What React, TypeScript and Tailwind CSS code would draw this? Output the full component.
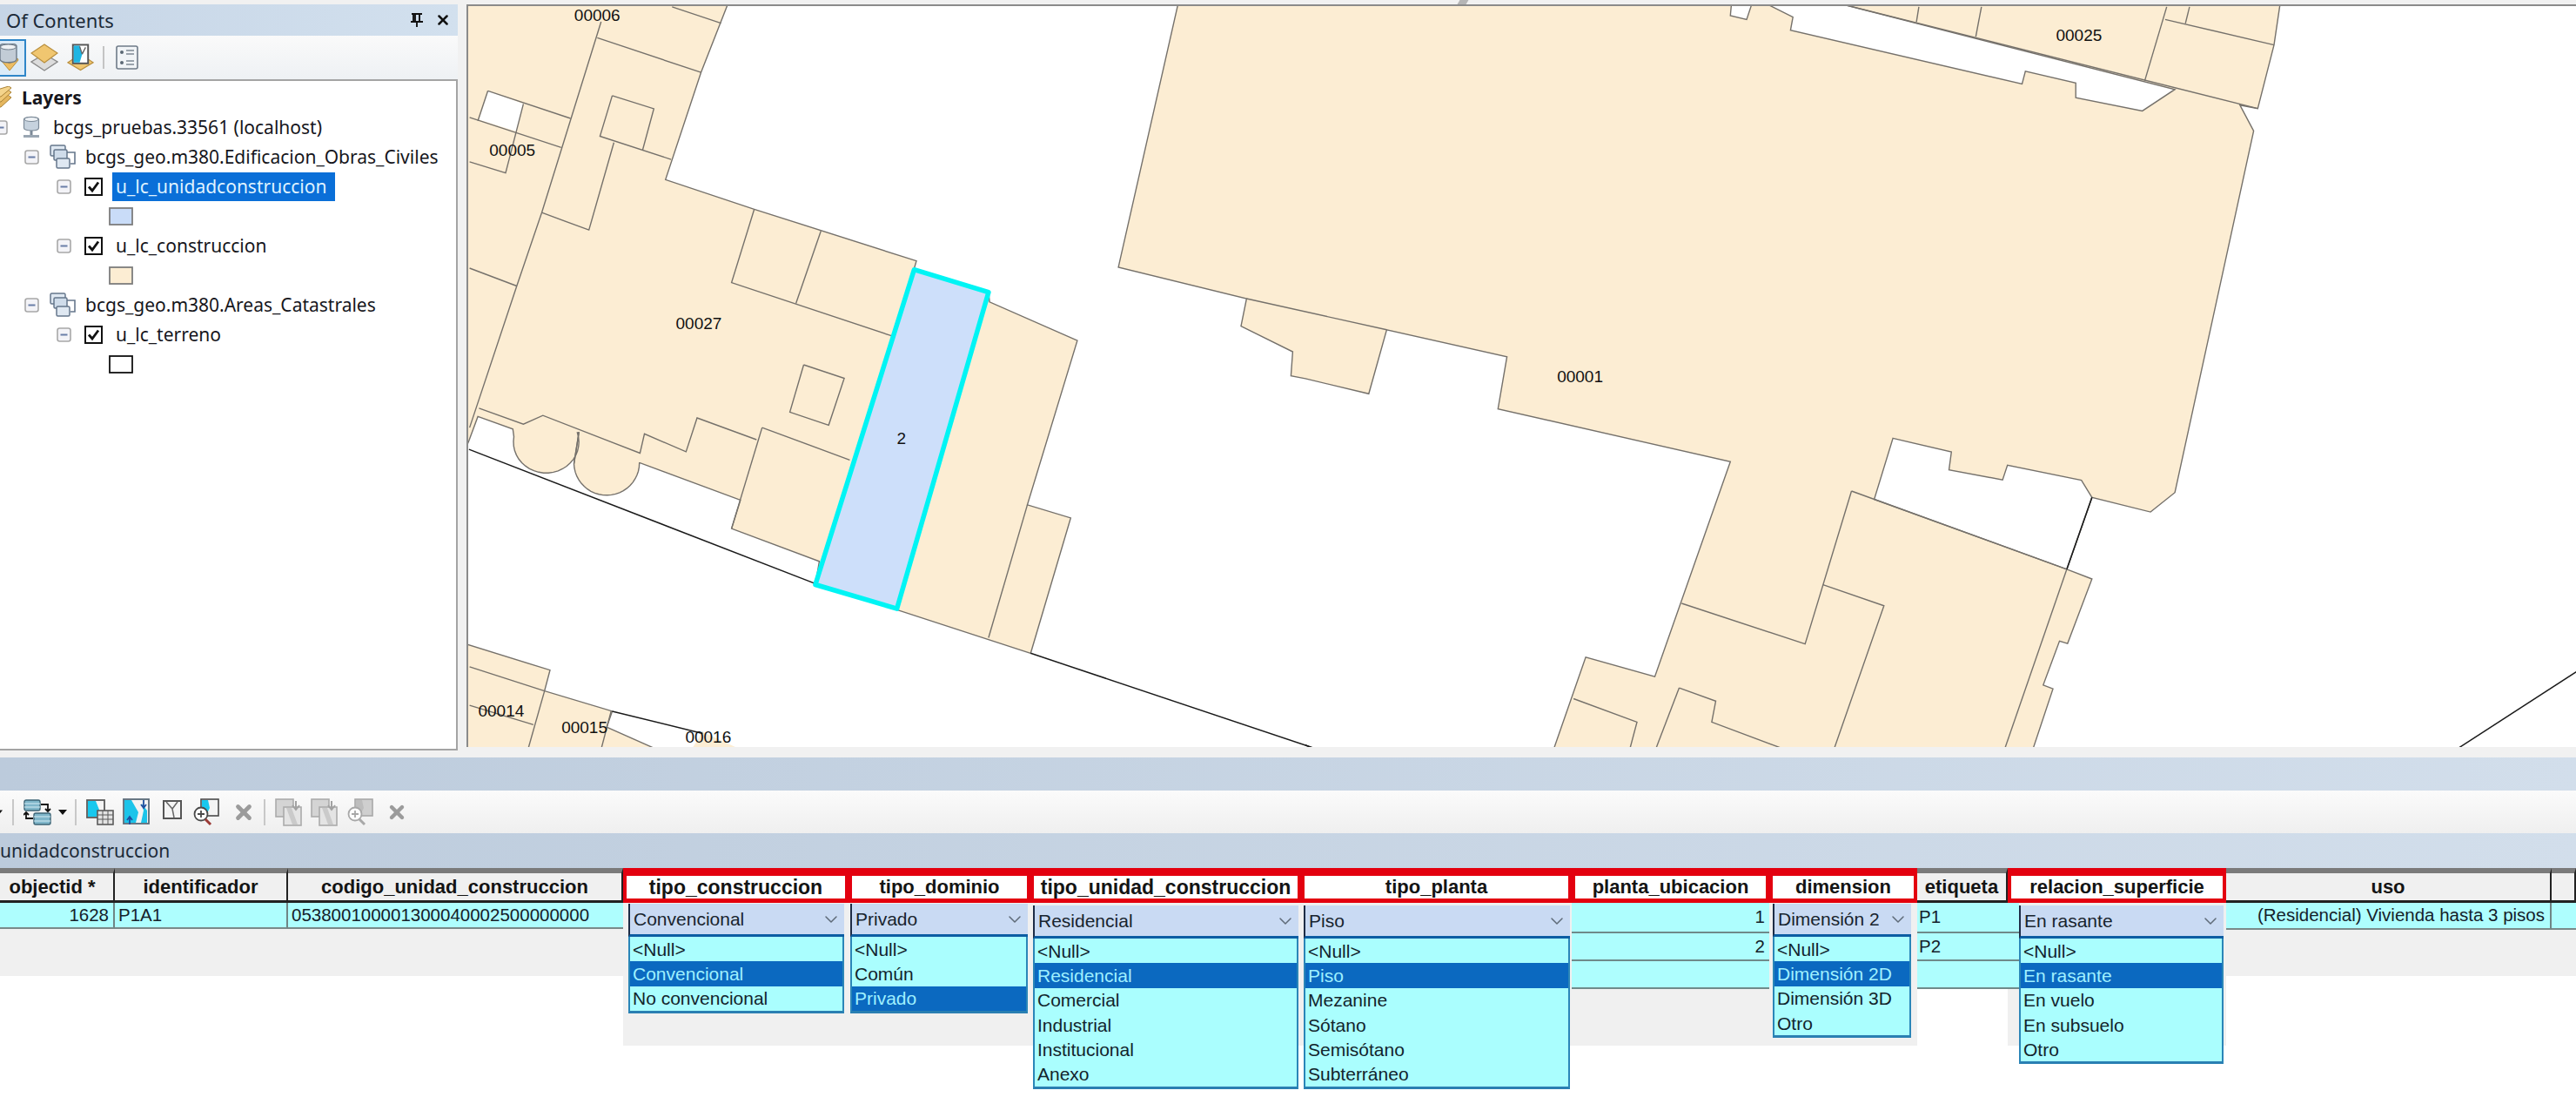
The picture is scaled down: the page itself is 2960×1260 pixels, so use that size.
import React from "react";
import { ChevronDown, X } from "lucide-react";

type P = [number, number];
const a = (pts: P[]): P[] => pts.map(([x, y]) => [530 + x / 1.568, y / 1.802]);
const b = (pts: P[]): P[] => pts.map(([x, y]) => [1500 + x / 1.071, y / 1.782]);
const str = (pts: P[]) => pts.map(([x, y]) => `${x.toFixed(1)},${y.toFixed(1)}`).join(" ");
const arc = (cx: number, cy: number, rx: number, ry: number, from: number, to: number): P[] => {
  const out: P[] = [];
  for (let i = 0; i <= 24; i++) {
    const t = ((from + ((to - from) * i) / 24) * Math.PI) / 180;
    out.push([cx + rx * Math.cos(t), cy + ry * Math.sin(t)]);
  }
  return out;
};

const FILL = "#fcedd3";
const LINE = "#75716b";

const leftOutline: P[] = [
  [0, -20], [490, -20], [432, 150], [368, 372], [528, 433], [820, 540], [816, 556], [950, 603], [952, 625], [1110, 705], [1020, 1045], [1098, 1072],
  [1026, 1352], [785, 1262], [638, 1210], [645, 1162], [487, 1094], [503, 1035], [322, 958],
  ...arc(262, 958, 59, 67, 0, 178), [212, 895],
  ...arc(153, 915, 59, 64, -18, 190), [93, 888], [30, 862], [14, 912], [0, 950],
];
const leftLines: P[][] = [
  [[380, 14], [468, 48]],
  [[245, 78], [432, 150]],
  [[252, 45], [145, 440], [100, 592], [15, 885]],
  [[48, 188], [197, 245]],
  [[15, 243], [180, 305]],
  [[48, 188], [30, 250]],
  [[112, 215], [80, 358], [15, 335]],
  [[272, 198], [347, 225], [327, 310]],
  [[272, 198], [250, 282], [378, 330]],
  [[275, 295], [230, 476], [145, 440]],
  [[15, 555], [100, 592]],
  [[528, 433], [487, 585], [775, 695]],
  [[648, 478], [603, 628]],
  [[617, 755], [690, 783], [662, 880], [592, 853], [617, 755]],
  [[32, 845], [112, 878], [147, 860], [322, 938], [330, 898], [405, 935], [425, 865], [532, 910]],
  [[542, 885], [700, 952]],
  [[542, 885], [487, 1094]],
  [[1020, 1045], [950, 1320]],
  [[212, 895], [203, 960]],
];
const bottomLeft: P[] = [[0, 1330], [160, 1387], [150, 1430], [272, 1472], [262, 1505], [370, 1560], [0, 1560]];
const bottomLeftLines: P[][] = [
  [[15, 1380], [150, 1430]],
  [[15, 1460], [130, 1500]],
  [[150, 1430], [118, 1560]],
  [[270, 1472], [250, 1560]],
  [[435, 1515], [420, 1560]],
];
const rightOutline: P[] = [
  ...a([[1297, -20]]),
  ...b([[1202, -20], [1192, 92], [1172, 222], [1150, 215], [1167, 268], [1070, 1008], [1040, 1048], [968, 1018], [937, 1165], [968, 1185], [938, 1317], [928, 1312], [908, 1402], [920, 1410], [890, 1560], [300, 1560], [345, 1345], [430, 1385], [523, 945], [237, 837], [248, 730], [100, 675], [78, 806], [0, 775]]),
  ...a([[1495, 778], [1498, 728], [1405, 675], [1415, 618], [1184, 553]]),
];
const rightHoles: P[][] = [
  [[723, 897], [795, 925], [792, 962], [858, 982], [864, 952], [955, 983], [968, 1018], [937, 1165], [700, 1022]],
  [[552, -5], [600, 35], [597, 62], [882, 172], [886, 146], [948, 170], [948, 200], [1030, 227], [1070, 183], [640, 0]],
  [[525, -5], [552, -5], [543, 40], [523, 32]],
];
const rightLines: P[][] = [
  [[640, 0], [1172, 222]],
  [[755, 14], [752, 45]],
  [[832, 14], [825, 75]],
  [[1060, 14], [1033, 165]],
  [[1088, 14], [1083, 48]],
  [[1058, 40], [1192, 92]],
  [[672, 1005], [615, 1318], [463, 1235]],
  [[672, 1005], [937, 1165]],
  [[637, 1197], [712, 1240], [645, 1560]],
  [[937, 1165], [855, 1560]],
  [[330, 1430], [408, 1478], [395, 1560]],
  [[460, 1408], [425, 1560]],
  [[460, 1408], [505, 1435], [500, 1478], [600, 1540]],
];
const labels: { t: string; p: P }[] = [
  { t: "00006", p: a([[245, 32]])[0] },
  { t: "00005", p: a([[92, 311]])[0] },
  { t: "00027", p: a([[428, 670]])[0] },
  { t: "2", p: a([[793, 908]])[0] },
  { t: "00014", p: a([[72, 1472]])[0] },
  { t: "00015", p: a([[222, 1506]])[0] },
  { t: "00016", p: a([[445, 1526]])[0] },
  { t: "00025", p: b([[952, 72]])[0] },
  { t: "00001", p: b([[338, 771]])[0] },
];

function MapView() {
  return (
    <svg viewBox="538 7 2422 851" className="block w-[2422px] h-[851px] bg-white">
      <polygon points={str(a(leftOutline))} fill={FILL} stroke={LINE} strokeWidth="1.4" />
      <polygon points={str(a([[48, 188], [112, 215], [100, 272], [32, 248]]))} fill="#fff" stroke="none" />
      {leftLines.map((l, i) => (
        <polyline key={i} points={str(a(l))} fill="none" stroke={LINE} strokeWidth="1.4" />
      ))}
      <polygon points={str(a(bottomLeft))} fill={FILL} stroke={LINE} strokeWidth="1.4" />
      {bottomLeftLines.map((l, i) => (
        <polyline key={i} points={str(a(l))} fill="none" stroke={LINE} strokeWidth="1.4" />
      ))}
      <polygon points={str(a([[435, 1515], [520, 1560], [410, 1560]]))} fill={FILL} />
      <polyline points={str(a([[14, 930], [638, 1208]]))} fill="none" stroke="#1a1a1a" strokeWidth="1.5" />
      <polyline points={str(a([[1026, 1352], [1535, 1548]]))} fill="none" stroke="#1a1a1a" strokeWidth="1.5" />
      <polyline points={str(a([[272, 1472], [435, 1518]]))} fill="none" stroke="#1a1a1a" strokeWidth="1.5" />
      <polygon points={str(rightOutline)} fill={FILL} stroke={LINE} strokeWidth="1.4" />
      {rightHoles.map((l, i) => (
        <polygon key={i} points={str(b(l))} fill="#fff" stroke={LINE} strokeWidth="1.4" />
      ))}
      {rightLines.map((l, i) => (
        <polyline key={i} points={str(b(l))} fill="none" stroke={LINE} strokeWidth="1.4" />
      ))}
      <polyline points={str([...a([[1415, 618]]), ...b([[100, 675]])])} fill="none" stroke={LINE} strokeWidth="1.4" />
      <polyline points={str(b([[968, 1018], [937, 1165]]))} fill="none" stroke="#1a1a1a" strokeWidth="1.5" />
      <polyline points={str(b([[1420, 1530], [1564, 1375]]))} fill="none" stroke="#1a1a1a" strokeWidth="1.5" />
      <polyline points={str(b([[0, 1525], [10, 1532]]))} fill="none" stroke="#1a1a1a" strokeWidth="1.5" />
      <polygon points={str(a([[816, 558], [950, 605], [785, 1260], [638, 1210]]))} fill="#cddffa" stroke="#00f4f4" strokeWidth="5.5" strokeLinejoin="round" />
      {labels.map((l) => (
        <text key={l.t} x={l.p[0]} y={l.p[1]} textAnchor="middle" dominantBaseline="central" fontSize="19" fontFamily="Liberation Sans, sans-serif" fill="#111">
          {l.t}
        </text>
      ))}
    </svg>
  );
}

/* ---------- icons ---------- */
function Minus() {
  return (
    <svg viewBox="0 0 17 17" className="w-[17px] h-[17px] shrink-0">
      <rect x="1" y="1" width="15" height="15" rx="2.5" fill="#f3f3f7" stroke="#a8a8a8" strokeWidth="1.6" />
      <rect x="4.5" y="7.5" width="8" height="2" fill="#6a7ea8" />
    </svg>
  );
}
function Check() {
  return (
    <svg viewBox="0 0 21 21" className="w-[21px] h-[21px] shrink-0">
      <rect x="1" y="1" width="19" height="19" fill="#fff" stroke="#111" strokeWidth="2" />
      <path d="M5 10.5 L9 15 L16 5.5" fill="none" stroke="#111" strokeWidth="2.8" />
    </svg>
  );
}
function Group() {
  return (
    <svg viewBox="0 0 30 28" className="w-[30px] h-[28px] shrink-0">
      <rect x="1" y="1" width="17" height="12" rx="1.5" fill="#dfe8f2" stroke="#66778c" strokeWidth="1.5" />
      <rect x="5" y="6" width="15" height="12" rx="1.5" fill="#cfdcea" stroke="#66778c" strokeWidth="1.5" />
      <rect x="8" y="16" width="15" height="11" rx="1.5" fill="#dfe8f2" stroke="#66778c" strokeWidth="1.5" />
      <path d="M20 9 H29 V22 H24" fill="none" stroke="#66778c" strokeWidth="1.6" />
    </svg>
  );
}
function Server() {
  return (
    <svg viewBox="0 0 20 27" className="w-[20px] h-[27px] shrink-0">
      <path d="M1.5 4 C1.5 0.5 18.5 0.5 18.5 4 V14 C18.5 18 1.5 18 1.5 14 Z" fill="#c6d2de" stroke="#7c8a98" strokeWidth="1.2" />
      <ellipse cx="10" cy="4" rx="8" ry="2.5" fill="#eef2f6" stroke="#7c8a98" strokeWidth="1" />
      <rect x="8.5" y="17" width="3" height="5" fill="#7c8a98" />
      <rect x="1" y="22" width="18" height="3" fill="#9aa6b2" />
    </svg>
  );
}
function LayersFolder() {
  return (
    <svg viewBox="0 0 20 26" className="w-[20px] h-[26px] shrink-0 -ml-[5px]">
      <path d="M2 16 L14 10 L18 13 L6 24 H2 Z" fill="#e5b65e" stroke="#a98236" strokeWidth="1" />
      <path d="M2 10 L14 4 L18 7 L6 18 H2 Z" fill="#efc775" stroke="#a98236" strokeWidth="1" />
      <path d="M2 4 L15 0 L18 2 L6 12 H2 Z" fill="#f4d48c" stroke="#a98236" strokeWidth="1" />
    </svg>
  );
}
function Swatch({ fill, stroke }: { fill: string; stroke: string }) {
  return (
    <svg viewBox="0 0 28 21" className="w-[28px] h-[21px] shrink-0">
      <rect x="1" y="1" width="26" height="19" fill={fill} stroke={stroke} strokeWidth="1.8" />
    </svg>
  );
}
function TocDb() {
  return (
    <svg viewBox="0 0 22 32" className="w-[22px] h-[32px]">
      <path d="M2 17 L11 23 L20 17 L21 19 L11 31 L1 19 Z" fill="#edbd62" stroke="#b98f3e" strokeWidth="1" />
      <path d="M0 3 C0 -1 19 -1 19 3 V18 C19 23 0 23 0 18 Z" fill="#c2ccd6" stroke="#6d7b89" strokeWidth="1.4" />
      <ellipse cx="9.5" cy="4" rx="9" ry="3" fill="#eef1f4" stroke="#6d7b89" strokeWidth="1" />
    </svg>
  );
}
function TocLayers() {
  return (
    <svg viewBox="0 0 32 32" className="w-[32px] h-[32px]">
      <path d="M16 12 L31 21 L16 31 L1 21 Z" fill="#dcdcdc" stroke="#8a8a8a" strokeWidth="1.4" />
      <path d="M16 1 L31 11 L16 22 L1 11 Z" fill="#f0c670" stroke="#b98f3e" strokeWidth="1.2" />
    </svg>
  );
}
function TocMap() {
  return (
    <svg viewBox="0 0 32 32" className="w-[31px] h-[32px]">
      <path d="M16 12 L31 22 L16 31 L1 22 Z" fill="#f0c670" stroke="#b98f3e" strokeWidth="1.2" />
      <rect x="7" y="1" width="18" height="22" fill="#fff" stroke="#555" strokeWidth="2" />
      <path d="M8 2 H15 L18 12 L15 22 H8 Z" fill="#1fb6e4" />
      <path d="M18 12 L22 4 M18 12 L15 3" stroke="#666" strokeWidth="1.4" fill="none" />
    </svg>
  );
}
function TocList() {
  return (
    <svg viewBox="0 0 26 28" className="w-[26px] h-[28px]">
      <rect x="1" y="1" width="24" height="26" rx="2" fill="#f1f4f7" stroke="#6f7b88" strokeWidth="1.6" />
      <circle cx="7" cy="8" r="2" fill="#5b6875" />
      <circle cx="7" cy="20" r="2" fill="#5b6875" />
      <path d="M12 6 H21 M12 10 H21 M12 18 H21 M12 22 H21" stroke="#7d8894" strokeWidth="1.6" />
    </svg>
  );
}
function SwapTables() {
  return (
    <svg viewBox="0 0 32 30" className="w-[32px] h-[30px]">
      <rect x="1" y="1" width="18" height="12" rx="2" fill="#7fb6ca" stroke="#3c6476" strokeWidth="1.4" />
      <path d="M1 5 H19 M1 9 H19" stroke="#d6ecf4" strokeWidth="1" />
      <rect x="12" y="16" width="19" height="13" rx="2" fill="#7fb6ca" stroke="#3c6476" strokeWidth="1.4" />
      <path d="M12 20 H31 M12 25 H31" stroke="#d6ecf4" strokeWidth="1" />
      <path d="M20 6 H28 V13 M25 11 L28 14 L31 11" fill="none" stroke="#111" strokeWidth="1.8" />
      <path d="M11 22 H3 V16 M0 18 L3 15 L6 18" fill="none" stroke="#111" strokeWidth="1.8" />
    </svg>
  );
}
function SelectByTable() {
  return (
    <svg viewBox="0 0 32 30" className="w-[32px] h-[30px]">
      <rect x="1" y="1" width="20" height="20" fill="#f4f4f4" stroke="#5a5a5a" strokeWidth="1.8" />
      <path d="M2 2 H11 L15 12 L12 20 H2 Z" fill="#18c8ee" />
      <rect x="13" y="13" width="18" height="16" fill="#e3e3e3" stroke="#5a5a5a" strokeWidth="1.6" />
      <path d="M13 18 H31 M13 23 H31 M19 13 V29 M25 13 V29" stroke="#5a5a5a" strokeWidth="1" />
    </svg>
  );
}
function CopyMuted() {
  return (
    <svg viewBox="0 0 32 32" className="w-[32px] h-[32px]">
      <rect x="1" y="1" width="20" height="20" fill="#d4d4d4" stroke="#ababab" strokeWidth="1.6" />
      <rect x="10" y="10" width="20" height="21" fill="#e4e4e4" stroke="#ababab" strokeWidth="1.6" />
      <path d="M13 11 L20 30 H26 L19 11 Z" fill="#cacaca" />
      <path d="M24 3 V12 M20 8 L24 13 L28 8" fill="none" stroke="#a2a2a2" strokeWidth="2" />
    </svg>
  );
}
function SwitchSel() {
  return (
    <svg viewBox="0 0 32 32" className="w-[32px] h-[32px]">
      <rect x="1" y="1" width="29" height="28" fill="#f3f3f3" stroke="#5a6b78" strokeWidth="1.8" />
      <path d="M2 2 H10 L18 16 L15 28 H2 Z" fill="#1cc4ea" />
      <path d="M22 6 L28 14 V28 H21 L24 14 Z" fill="#1cc4ea" />
      <path d="M24 2 V10 M21 7 L24 11 L27 7" fill="none" stroke="#1f4f9e" strokeWidth="1.8" />
      <path d="M8 30 V22 M5 25 L8 21 L11 25" fill="none" stroke="#1f4f9e" strokeWidth="1.8" />
    </svg>
  );
}
function ClearSel() {
  return (
    <svg viewBox="0 0 22 22" className="w-[22px] h-[22px]">
      <rect x="1" y="1" width="20" height="20" fill="#f4f4f4" stroke="#555" strokeWidth="2" />
      <path d="M4 2 L11 10 L17 2 M11 10 L13 20" fill="none" stroke="#666" strokeWidth="1.5" />
    </svg>
  );
}
function ZoomSel({ mute }: { mute?: boolean }) {
  const s = mute ? "#a8a8a8" : "#4a4a4a";
  return (
    <svg viewBox="0 0 30 32" className="w-[30px] h-[32px]">
      <rect x="9" y="1" width="20" height="19" fill={mute ? "#cfcfcf" : "#f4f4f4"} stroke={s} strokeWidth="1.6" />
      <path d="M10 2 H17 L19 11 L15 19 H10 Z" fill={mute ? "#bdbdbd" : "#18c8ee"} />
      <circle cx="9" cy="18" r="7.5" fill="#fff" stroke={s} strokeWidth="1.8" />
      <path d="M5 18 H13 M9 14 V22" stroke={s} strokeWidth="1.8" />
      <path d="M14 24 L20 30" stroke={mute ? "#a8a8a8" : "#9a3a36"} strokeWidth="3" />
    </svg>
  );
}
function GrayX({ cls }: { cls: string }) {
  return <X className={cls} color="#9b9b9b" strokeWidth={4.4} />;
}
function PinIcon() {
  return (
    <svg viewBox="0 0 14 16" className="w-[14px] h-[16px]">
      <path d="M1 1 H13 M3 1 V10 M10 1 V10 M0 10 H14 M7 10 V16 M5 2 V9" fill="none" stroke="#111" strokeWidth="1.9" />
    </svg>
  );
}
function Sep({ cls }: { cls: string }) {
  return <div className={cls} />;
}
function Caret({ cls }: { cls: string }) {
  return (
    <svg viewBox="0 0 10 6" className={cls}>
      <path d="M0 0 H10 L5 6 Z" fill="#111" />
    </svg>
  );
}

/* ---------- tree ---------- */
const treeText = "text-[21px] leading-none text-[#16161c] font-['Noto_Sans',sans-serif] whitespace-nowrap";

function Tree() {
  return (
    <div className="flex-1 bg-white border-t-2 border-r-2 border-b-2 border-[#a4a4a4] flex flex-col pt-[2px]">
      <div className="h-[34px] flex items-center">
        <LayersFolder />
        <span className={`${treeText} ml-[10px] font-bold`}>Layers</span>
      </div>
      <div className="h-[34px] flex items-center">
        <div className="-ml-[8px]"><Minus /></div>
        <div className="ml-[17px]"><Server /></div>
        <span className={`${treeText} ml-[15px]`}>bcgs_pruebas.33561 (localhost)</span>
      </div>
      <div className="h-[34px] flex items-center pl-[28px]">
        <Minus />
        <div className="ml-[12px]"><Group /></div>
        <span className={`${treeText} ml-[11px]`}>bcgs_geo.m380.Edificacion_Obras_Civiles</span>
      </div>
      <div className="h-[34px] flex items-center pl-[65px]">
        <Minus />
        <div className="ml-[15px]"><Check /></div>
        <span className={`${treeText} ml-[11px] bg-[#0a6fd8] text-[#dff2ff] h-[33px] w-[256px] flex items-center pl-[4px]`}>u_lc_unidadconstruccion</span>
      </div>
      <div className="h-[34px] flex items-center pl-[125px]">
        <Swatch fill="#c9dcf8" stroke="#7d7d7d" />
      </div>
      <div className="h-[34px] flex items-center pl-[65px]">
        <Minus />
        <div className="ml-[15px]"><Check /></div>
        <span className={`${treeText} ml-[15px]`}>u_lc_construccion</span>
      </div>
      <div className="h-[34px] flex items-center pl-[125px]">
        <Swatch fill="#fcedd3" stroke="#7d7d7d" />
      </div>
      <div className="h-[34px] flex items-center pl-[28px]">
        <Minus />
        <div className="ml-[12px]"><Group /></div>
        <span className={`${treeText} ml-[11px]`}>bcgs_geo.m380.Areas_Catastrales</span>
      </div>
      <div className="h-[34px] flex items-center pl-[65px]">
        <Minus />
        <div className="ml-[15px]"><Check /></div>
        <span className={`${treeText} ml-[15px]`}>u_lc_terreno</span>
      </div>
      <div className="h-[34px] flex items-center pl-[125px]">
        <Swatch fill="#ffffff" stroke="#111111" />
      </div>
    </div>
  );
}

/* ---------- table ---------- */
const cell = "text-[20.5px] leading-none text-[#15212a] whitespace-nowrap";
const liRow = "text-[21px] leading-none whitespace-nowrap flex items-center pl-[3px] h-[28.3px]";

function RedHead({ t, cls }: { t: string; cls: string }) {
  return (
    <div className={`${cls} w-full h-[40px] shrink-0 bg-white border-[#e3000f] border-t-[9px] border-b-[5px] border-x-[4px] flex items-center justify-center overflow-hidden font-bold leading-none text-[#141414] whitespace-nowrap`}>
      {t}
    </div>
  );
}
function PlainHead({ t, cls }: { t: string; cls?: string }) {
  return (
    <div className={`${cls ?? ""} w-full h-[40px] shrink-0 bg-[#f0f0f0] border-t-[6px] border-t-[#7a7a7a] border-b-[3px] border-b-[#222] border-r-[2px] border-r-[#222] flex items-center justify-center overflow-hidden text-[22px] font-bold leading-none text-[#141414] whitespace-nowrap`}>
      {t}
    </div>
  );
}
function Combo({ cls, value, items, sel }: { cls: string; value: string; items: string[]; sel: string }) {
  return (
    <div className={cls}>
      <div className="h-[38px] bg-[#c9daf3] border-b-[3px] border-b-[#0c5da3] border-l-2 border-l-[#1d2c46] flex items-center pl-[4px] pr-[3px]">
        <span className="flex-1 min-w-0 overflow-hidden whitespace-nowrap text-[21px] leading-none text-[#18242e]">{value}</span>
        <ChevronDown className="ml-[10px] w-[24px] h-[24px] shrink-0" color="#5f6b78" strokeWidth={1.5} />
      </div>
      <div className="bg-[#aafefe] border-x-2 border-x-[#2a86b8] border-b-[3px] border-b-[#2a7fb2]">
        {items.map((it) => (
          <div key={it} className={`${liRow} ${it === sel ? "bg-[#0b69c0] text-[#9ff0ff]" : "text-[#12242c]"}`}>
            {it}
          </div>
        ))}
      </div>
    </div>
  );
}

export default function App() {
  return (
    <div className="w-[2960px] h-[1260px] overflow-hidden bg-white font-['Liberation_Sans',sans-serif]">
      {/* top area */}
      <div className="relative h-[870px] bg-[#f1f1f1] pt-[5px] flex items-start">
        <div className="absolute left-[1676px] top-0 w-[10px] h-[5px] bg-[#b5b5b5] -skew-x-[30deg]" />
        <div className="w-[526px] h-[857px] flex flex-col shrink-0">
          <div className="h-[36px] flex items-center bg-linear-to-r from-[#c6d5e6] to-[#d2e0ee] pl-[7px] pr-[8px]">
            <span className="text-[22px] leading-none text-[#1c2a38] font-['Noto_Sans',sans-serif]">Of Contents</span>
            <div className="ml-auto flex items-center gap-[14px]">
              <PinIcon />
              <X className="w-[18px] h-[18px]" color="#111" strokeWidth={3.4} />
            </div>
          </div>
          <div className="h-[50px] flex items-center bg-linear-to-b from-[#fafafa] to-[#eef1f4]">
            <div className="w-[30px] h-[43px] bg-[#dbebf8] border-2 border-l-0 border-[#2f86c8] flex items-center overflow-hidden">
              <TocDb />
            </div>
            <div className="ml-[5px]"><TocLayers /></div>
            <div className="ml-[10px]"><TocMap /></div>
            <Sep cls="ml-[10px] w-[2px] h-[26px] bg-[#c4c4c4]" />
            <div className="ml-[13px]"><TocList /></div>
          </div>
          <Tree />
        </div>
        <div className="ml-[10px] flex-1 h-[853px] border-t-2 border-t-[#8a8a8a] border-l-2 border-l-[#8a8a8a] overflow-hidden">
          <MapView />
        </div>
      </div>

      {/* attribute table window */}
      <div className="h-[38px] bg-linear-to-r from-[#bccbdc] to-[#d2deeb]" />
      <div className="h-[49px] bg-linear-to-b from-[#fbfbfb] to-[#efefef] flex items-center">
        <Caret cls="w-[8px] h-[6px] -ml-[5px]" />
        <Sep cls="ml-[11px] w-[2px] h-[30px] bg-[#c8c8c8]" />
        <div className="ml-[11px]"><SwapTables /></div>
        <Caret cls="ml-[8px] w-[10px] h-[6px]" />
        <Sep cls="ml-[9px] w-[2px] h-[30px] bg-[#c8c8c8]" />
        <div className="ml-[11px]"><SelectByTable /></div>
        <div className="ml-[10px]"><SwitchSel /></div>
        <div className="ml-[14px] -mt-[6px]"><ClearSel /></div>
        <div className="ml-[13px]"><ZoomSel /></div>
        <div className="ml-[15px]"><GrayX cls="w-[26px] h-[26px]" /></div>
        <Sep cls="ml-[10px] w-[2px] h-[30px] bg-[#c8c8c8]" />
        <div className="ml-[11px]"><CopyMuted /></div>
        <div className="ml-[9px]"><CopyMuted /></div>
        <div className="ml-[10px]"><ZoomSel mute /></div>
        <div className="ml-[15px]"><GrayX cls="w-[24px] h-[24px]" /></div>
      </div>
      <div className="h-[40px] flex items-center bg-linear-to-r from-[#bccbdc] to-[#d2deeb] pt-[1px]">
        <span className="text-[21px] leading-none text-[#1c2a38] font-['Noto_Sans',sans-serif]">unidadconstruccion</span>
      </div>

      {/* table */}
      <div className="h-[124px] bg-[#f0f0f0] flex items-start">
        <div className="w-[132px] shrink-0">
          <PlainHead t="objectid *" cls="pr-[10px]" />
          <div className={`${cell} h-[30px] bg-[#aefefe] border-b-2 border-b-[#7a8a8a] border-r-2 border-r-[#6f8585] flex items-center justify-end pr-[5px]`}>1628</div>
        </div>
        <div className="w-[199px] shrink-0">
          <PlainHead t="identificador" />
          <div className={`${cell} h-[30px] bg-[#aefefe] border-b-2 border-b-[#7a8a8a] border-r-2 border-r-[#6f8585] flex items-center pl-[4px]`}>P1A1</div>
        </div>
        <div className="w-[385px] shrink-0">
          <PlainHead t="codigo_unidad_construccion" />
          <div className={`${cell} h-[30px] bg-[#aefefe] border-b-2 border-b-[#7a8a8a] flex items-center pl-[4px]`}>053800100001300040002500000000</div>
        </div>

        <div className="w-[259px] h-[204px] shrink-0 bg-[#f0f0f0]">
          <RedHead t="tipo_construccion" cls="text-[23px]" />
          <Combo cls="ml-[6px] w-[248px] mt-[1px]" value="Convencional" items={["<Null>", "Convencional", "No convencional"]} sel="Convencional" />
        </div>
        <div className="w-[209px] h-[204px] shrink-0 bg-[#f0f0f0]">
          <RedHead t="tipo_dominio" cls="text-[22px]" />
          <Combo cls="ml-[2px] w-[204px] mt-[1px]" value="Privado" items={["<Null>", "Común", "Privado"]} sel="Privado" />
        </div>
        <div className="w-[311px] h-[204px] shrink-0 bg-[#f0f0f0]">
          <RedHead t="tipo_unidad_construccion" cls="text-[23px]" />
          <Combo cls="ml-[3px] w-[305px] mt-[3px]" value="Residencial" items={["<Null>", "Residencial", "Comercial", "Industrial", "Institucional", "Anexo"]} sel="Residencial" />
        </div>
        <div className="w-[311px] h-[204px] shrink-0 bg-[#f0f0f0]">
          <RedHead t="tipo_planta" cls="text-[22px]" />
          <Combo cls="ml-[3px] w-[306px] mt-[3px]" value="Piso" items={["<Null>", "Piso", "Mezanine", "Sótano", "Semisótano", "Subterráneo"]} sel="Piso" />
        </div>
        <div className="w-[227px] h-[204px] shrink-0 bg-[#f0f0f0]">
          <RedHead t="planta_ubicacion" cls="text-[22px]" />
          <div className={`${cell} h-[35px] bg-[#aefefe] border-b-2 border-b-[#6f8a8a] flex items-center justify-end pr-[5px]`}>1</div>
          <div className={`${cell} h-[32px] bg-[#aefefe] border-b-2 border-b-[#6f8a8a] flex items-center justify-end pr-[5px]`}>2</div>
          <div className={`${cell} h-[32px] bg-[#aefefe] border-b-2 border-b-[#6f8a8a]`} />
        </div>
        <div className="w-[170px] h-[204px] shrink-0 bg-[#f0f0f0]">
          <RedHead t="dimension" cls="text-[22px]" />
          <Combo cls="ml-[4px] w-[159px] mt-[1px]" value="Dimensión 2D" items={["<Null>", "Dimensión 2D", "Dimensión 3D", "Otro"]} sel="Dimensión 2D" />
        </div>
        <div className="w-[104px] h-[204px] shrink-0 relative z-10">
          <PlainHead t="etiqueta" />
          <div className="w-[117px]">
            <div className={`${cell} h-[35px] bg-[#aefefe] border-b-2 border-b-[#6f8a8a] flex items-center pl-[2px]`}>P1</div>
            <div className={`${cell} h-[32px] bg-[#aefefe] border-b-2 border-b-[#6f8a8a] flex items-center pl-[2px]`}>P2</div>
            <div className={`${cell} h-[32px] bg-[#aefefe] border-b-2 border-b-[#6f8a8a]`} />
          </div>
        </div>
        <div className="w-[251px] h-[204px] shrink-0 bg-[#f0f0f0]">
          <RedHead t="relacion_superficie" cls="text-[22px]" />
          <Combo cls="ml-[13px] w-[235px] mt-[3px]" value="En rasante" items={["<Null>", "En rasante", "En vuelo", "En subsuelo", "Otro"]} sel="En rasante" />
        </div>
        <div className="w-[374px] shrink-0">
          <PlainHead t="uso" />
          <div className={`${cell} h-[31px] bg-[#aefefe] border-b-2 border-b-[#7a8a8a] border-r-2 border-r-[#6f8585] flex items-center justify-end pr-[6px]`}>(Residencial) Vivienda hasta 3 pisos</div>
        </div>
        <div className="flex-1 min-w-0">
          <PlainHead t="" />
          <div className="h-[31px] bg-[#aefefe] border-b-2 border-b-[#7a8a8a]" />
        </div>
      </div>
    </div>
  );
}
